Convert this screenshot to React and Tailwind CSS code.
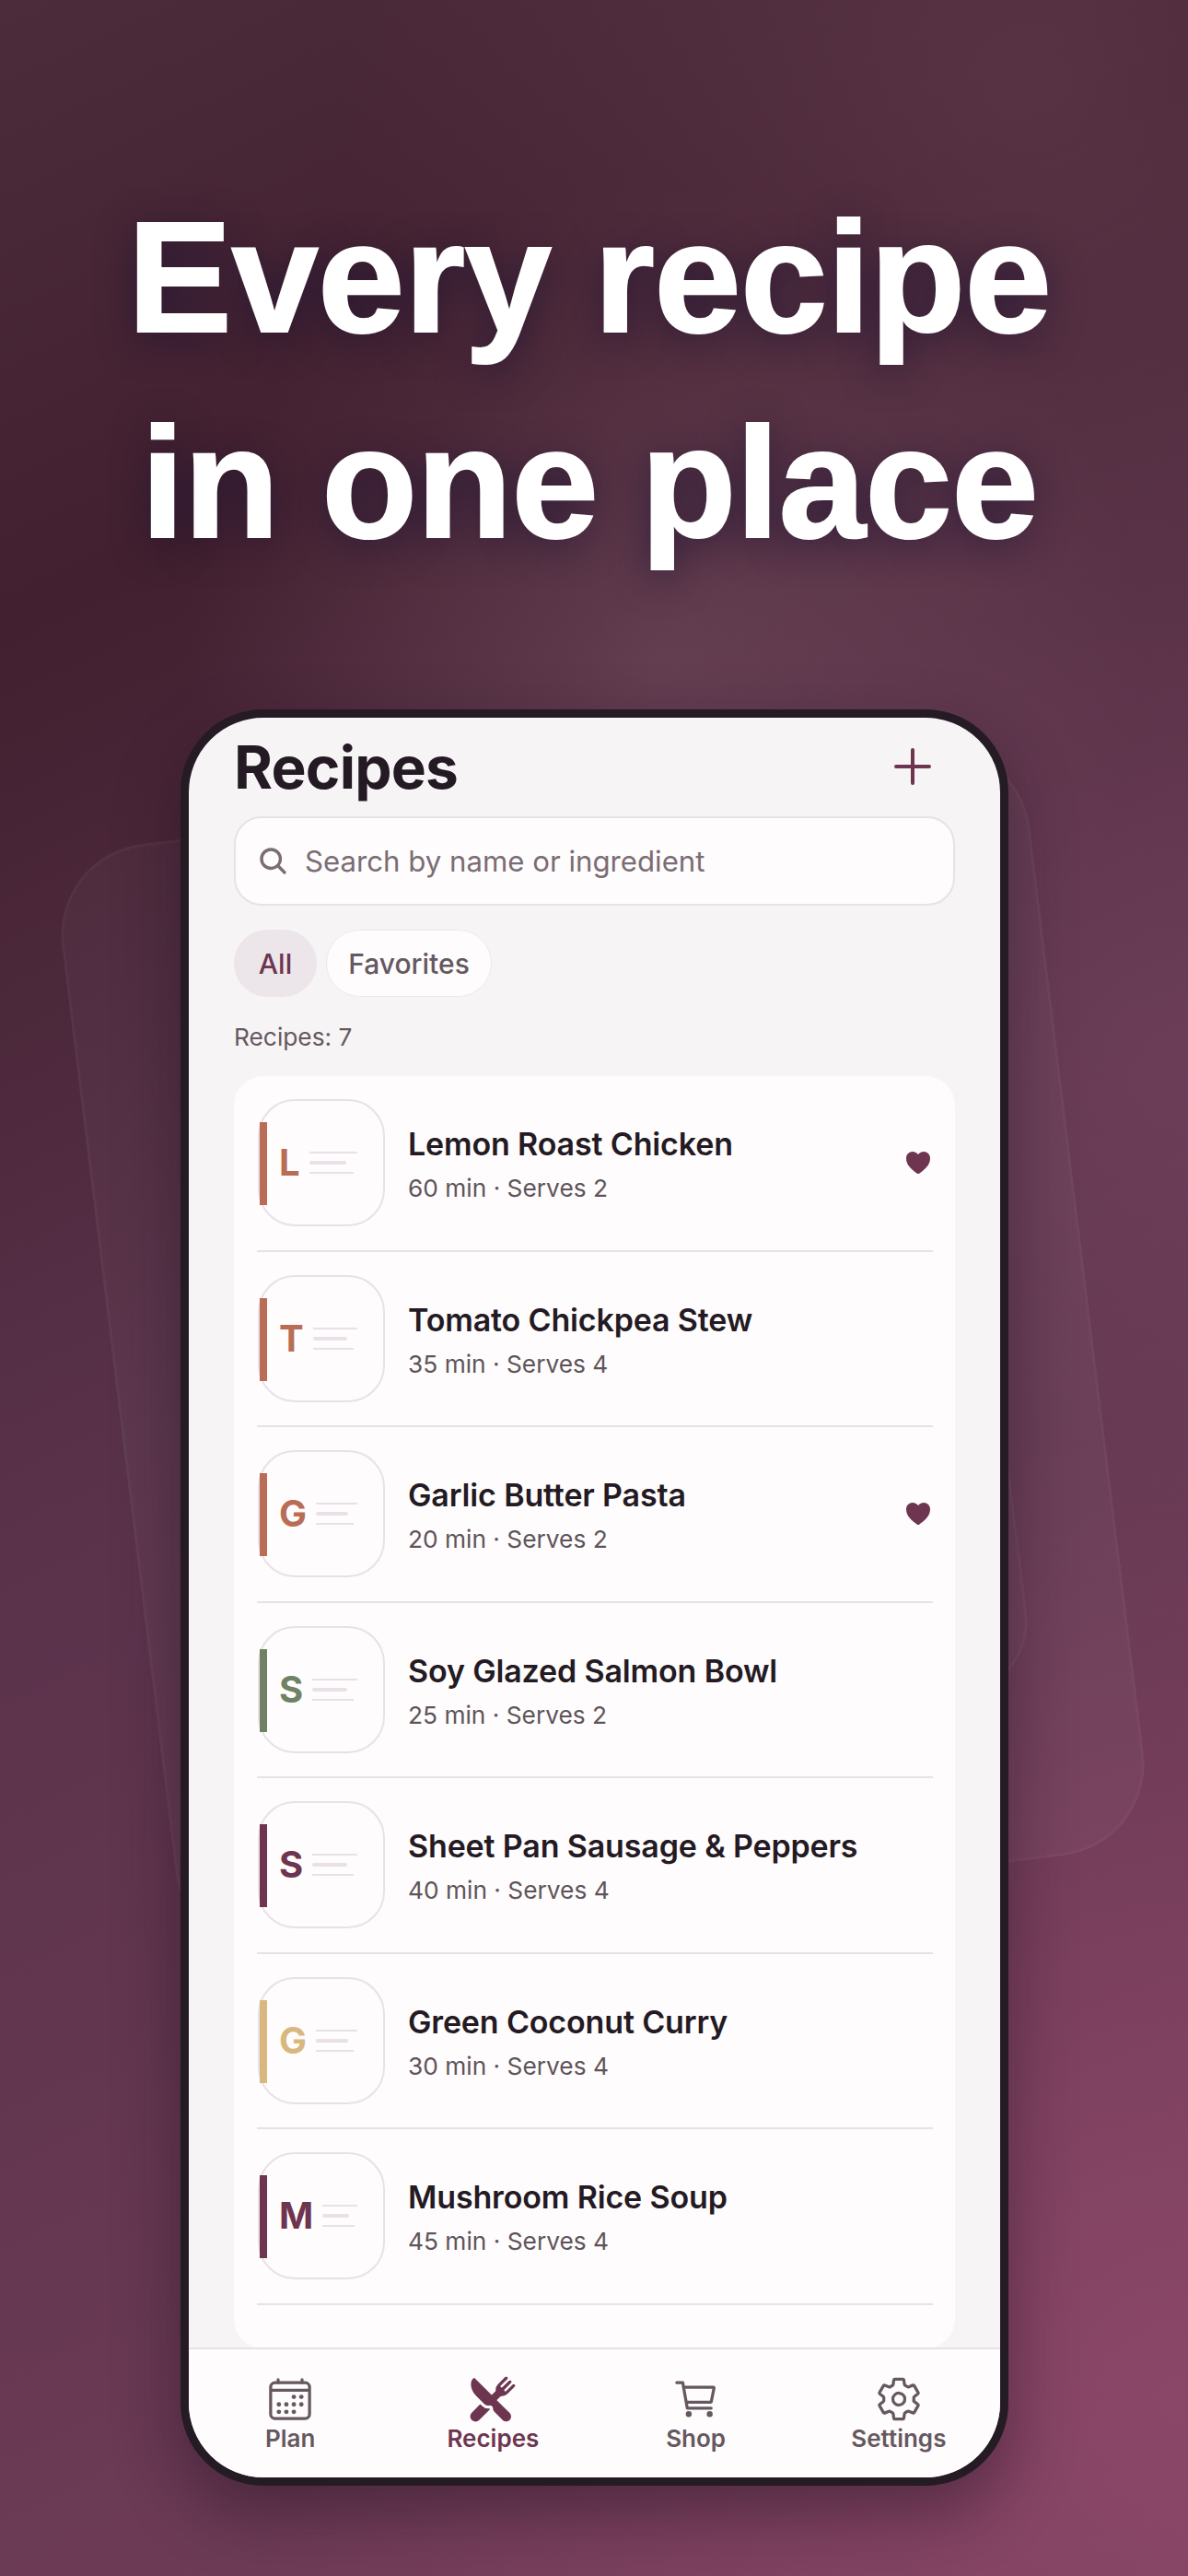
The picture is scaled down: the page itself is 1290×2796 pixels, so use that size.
import React from 'react';
import { IoAdd, IoCalendarOutline, IoCartOutline, IoHeart, IoRestaurant, IoSearch, IoSettingsOutline } from 'react-icons/io5';

const RECIPES = [
  { name: 'Lemon Roast Chicken', meta: '60 min · Serves 2', letter: 'L', bar: 'bg-[#b96d56]', text: 'text-[#b96d56]', fav: true },
  { name: 'Tomato Chickpea Stew', meta: '35 min · Serves 4', letter: 'T', bar: 'bg-[#b96d56]', text: 'text-[#b96d56]' },
  { name: 'Garlic Butter Pasta', meta: '20 min · Serves 2', letter: 'G', bar: 'bg-[#b96d56]', text: 'text-[#b96d56]', fav: true },
  { name: 'Soy Glazed Salmon Bowl', meta: '25 min · Serves 2', letter: 'S', bar: 'bg-[#6f8263]', text: 'text-[#6f8263]' },
  { name: 'Sheet Pan Sausage & Peppers', meta: '40 min · Serves 4', letter: 'S', bar: 'bg-[#6e3550]', text: 'text-[#6e3550]' },
  { name: 'Green Coconut Curry', meta: '30 min · Serves 4', letter: 'G', bar: 'bg-[#d9b87f]', text: 'text-[#d9b87f]' },
  { name: 'Mushroom Rice Soup', meta: '45 min · Serves 4', letter: 'M', bar: 'bg-[#6e3550]', text: 'text-[#6e3550]' },
];

const TABS = [
  { label: 'Plan', Icon: IoCalendarOutline },
  { label: 'Recipes', Icon: IoRestaurant, active: true },
  { label: 'Shop', Icon: IoCartOutline },
  { label: 'Settings', Icon: IoSettingsOutline },
];

function Thumb({ recipe }) {
  return (
    <div className="relative w-[138px] h-[138px] shrink-0 rounded-[40px] border-2 border-[#e9e1e7] bg-[#fefcfc] flex items-center pl-[21px]">
      <div className={`absolute left-0 top-[23px] w-[8px] h-[90px] ${recipe.bar}`} />
      <div className="flex items-center gap-[10px] w-[85px]">
        <span className={`text-[40px] leading-none font-bold ${recipe.text}`}>{recipe.letter}</span>
        <div className="flex-1 flex flex-col gap-[8px]">
          <div className="h-[2px] bg-[#e9e1e7]" />
          <div className="h-[4px] w-[77%] rounded-full bg-[#e9e1e7]" />
          <div className="h-[2px] w-[92%] bg-[#e9e1e7]" />
        </div>
      </div>
    </div>
  );
}

function RecipeRow({ recipe }) {
  return (
    <div className="flex items-center pl-[1px] pt-[25px] pb-[25.5px] border-b-2 border-[#e9e1e7]">
      <Thumb recipe={recipe} />
      <div className="ml-[25px] flex-1 pt-[3px]">
        <div className="text-[34px] leading-[44px] font-semibold text-[#241a23] tracking-[-0.15px]">{recipe.name}</div>
        <div className="mt-[9px] text-[26.3px] leading-[34px] text-[#5f545b]">{recipe.meta}</div>
      </div>
      {recipe.fav && <IoHeart className="text-[#6e3550]" size={32} />}
    </div>
  );
}

export default function App() {
  return (
    <div className="relative w-[1290px] h-[2796px] overflow-hidden flex flex-col font-['Inter',sans-serif] bg-[radial-gradient(circle_at_1120px_100px,rgba(115,75,95,0.42)_0,rgba(115,75,95,0)_750px),radial-gradient(circle_at_720px_720px,rgba(130,90,110,0.42)_0,rgba(130,90,110,0)_520px),radial-gradient(circle_at_1290px_1150px,rgba(125,72,100,0.5)_0,rgba(125,72,100,0)_800px),radial-gradient(circle_at_1290px_2600px,rgba(150,75,110,0.7)_0,rgba(150,75,110,0)_1050px),linear-gradient(155deg,#4c2b3b_0%,#42202f_20%,#59324a_48%,#753e5a_100%)]">
      {/* faint tilted cards behind the phone */}
      <div className="absolute left-[125px] top-[859px] w-[1059px] h-[1212px] rounded-[100px] -rotate-7 border-[3px] border-white/3 bg-white/3" />
      <div className="absolute left-[273px] top-[982px] w-[800px] h-[900px] rounded-[80px] -rotate-7 border-[3px] border-white/3 bg-white/2" />

      <h1 className="relative pt-[190px] pr-[10px] text-center text-white font-['Liberation_Sans',sans-serif] font-bold text-[170px] leading-[223px] tracking-[-0.7px] [-webkit-text-stroke:2px_white] [text-shadow:0_8px_40px_rgba(30,20,50,0.75)]">
        <div>Every recipe</div>
        <div>in one place</div>
      </h1>

      <div className="relative ml-[196px] mt-[134px] w-[899px] h-[1928px] rounded-[90px] border-[9px] border-[#241b24] shadow-[0_30px_70px_rgba(30,15,30,0.45)] overflow-hidden flex flex-col bg-[#f7f4f6]">
        <main className="flex-1 min-h-0 overflow-hidden px-[49px]">
          <header className="h-[107px] flex items-center justify-between">
            <h2 className="text-[64px] font-bold text-[#241a23] tracking-[-0.8px]">Recipes</h2>
            <IoAdd className="text-[#6e3550] mr-[14px] -translate-y-[1px]" size={64} />
          </header>

          <div className="h-[97px] rounded-[30px] border-2 border-[#e9e1e7] bg-[#fefcfc] flex items-center pl-[23px] gap-[17px]">
            <IoSearch className="text-[#7a6d75]" size={35} />
            <span className="pt-[2px] text-[31.2px] text-[#7a6d75]">Search by name or ingredient</span>
          </div>

          <div className="mt-[26px] flex gap-[10px]">
            <div className="h-[73px] w-[90px] pt-[2px] rounded-full bg-[#ece5e9] flex items-center justify-center text-[30px] font-medium text-[#6e3550]">All</div>
            <div className="h-[73px] w-[180px] pt-[2px] rounded-full bg-[#fefcfc] border border-[#eee8ec] flex items-center justify-center text-[30px] font-medium text-[#655860]">Favorites</div>
          </div>

          <div className="mt-[27px] text-[26.3px] leading-[34px] text-[#655860]">Recipes: 7</div>

          <section className="mt-[25px] rounded-[32px] bg-[#fefcfc] pl-[25px] pr-[24px] pb-[47px]">
            {RECIPES.map((r) => <RecipeRow key={r.name} recipe={r} />)}
          </section>
        </main>

        <nav className="h-[141px] shrink-0 border-t-2 border-[#e9e1e7] bg-[#fefcfc] flex pt-[28px]">
          {TABS.map(({ label, Icon, active }) => (
            <div key={label} className={`flex-1 flex flex-col items-center ${active ? 'text-[#6e3550]' : 'text-[#655860]'}`}>
              <Icon size={52} />
              <span className="text-[26px] leading-[34px] font-semibold">{label}</span>
            </div>
          ))}
        </nav>
      </div>
    </div>
  );
}
